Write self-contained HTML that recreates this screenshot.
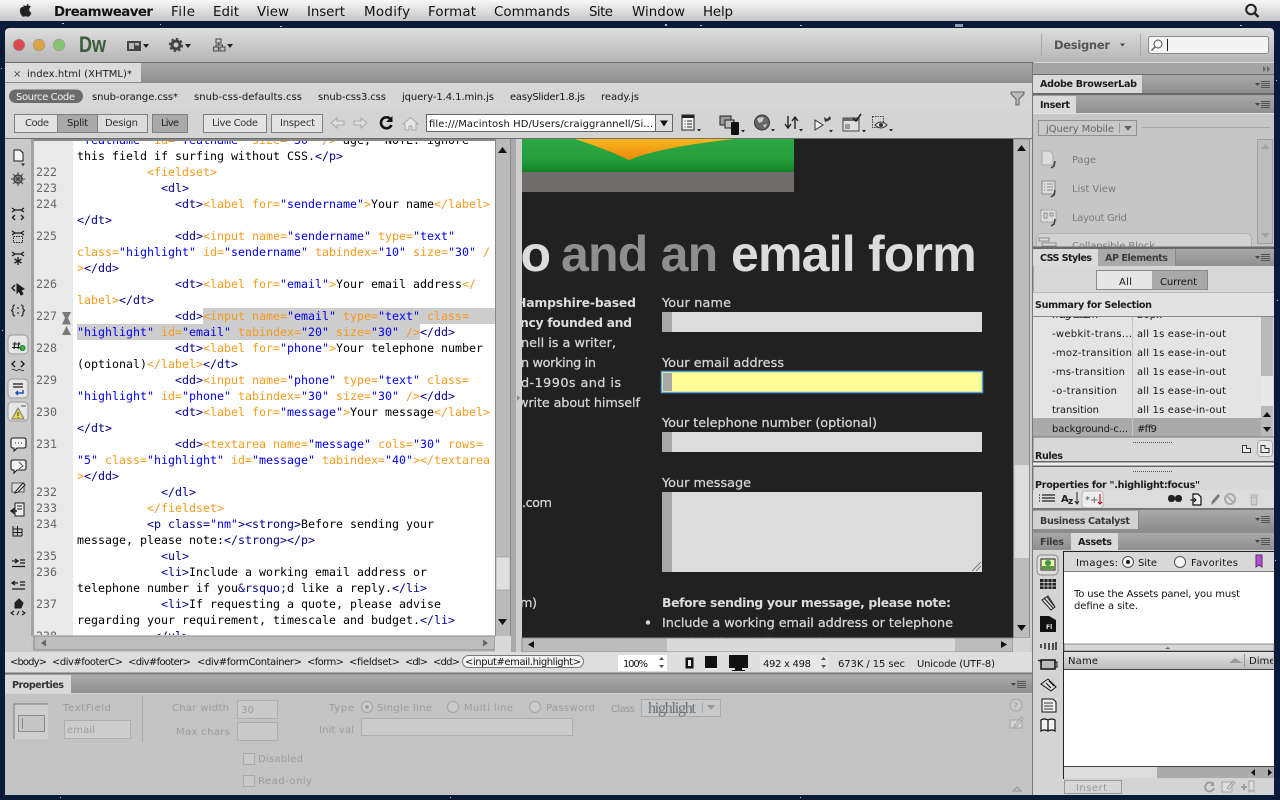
<!DOCTYPE html>
<html lang="en">
<head>
<meta charset="utf-8">
<title>Dreamweaver</title>
<style>
html,body{margin:0;padding:0;background:#0b1a38;width:1280px;height:800px;overflow:hidden}
svg{display:block;position:absolute;left:0;top:0}
text{font-family:"DejaVu Sans",sans-serif;font-size:10px;fill:#151515}
.m{font-size:13.4px;fill:#111}
.bd{font-weight:bold}
.pb{font-weight:bold;font-size:9.6px;fill:#1c1c1c}
.pg{font-weight:bold;font-size:9.6px;fill:#3c3c3c}
.x{fill:#9d9d9d;font-size:10px}
.ins{fill:#7b7b7b;font-size:10px}
.d{font-size:12.8px;fill:#d6d6d6;stroke:#d6d6d6;stroke-width:.25px}
.db{font-size:12.4px;font-weight:bold;fill:#dcdcdc}
.c{font-family:"DejaVu Sans Mono",monospace;font-size:11.63px;white-space:pre;fill:#000}
.ln{font-family:"DejaVu Sans Mono",monospace;font-size:11.63px;fill:#666}
.o{fill:#f59a1c}.n{fill:#000088}.v{fill:#0000f0}
.h{font-family:"Liberation Sans",sans-serif;font-weight:bold;font-size:50px;letter-spacing:-.8px}
</style>
</head>
<body>
<svg width="1280" height="800" viewBox="0 0 1280 800" xmlns="http://www.w3.org/2000/svg">
<defs>
<linearGradient id="gm" x1="0" y1="0" x2="0" y2="1"><stop offset="0" stop-color="#f7f7f7"/><stop offset="1" stop-color="#c6c6c6"/></linearGradient>
<linearGradient id="gt" x1="0" y1="0" x2="0" y2="1"><stop offset="0" stop-color="#dedede"/><stop offset="1" stop-color="#b5b5b5"/></linearGradient>
<linearGradient id="gs" x1="0" y1="0" x2="0" y2="1"><stop offset="0" stop-color="#a8a8a8"/><stop offset="1" stop-color="#8f8f8f"/></linearGradient>
<linearGradient id="gh" x1="0" y1="0" x2="0" y2="1"><stop offset="0" stop-color="#e2e2e2"/><stop offset="1" stop-color="#bcbcbc"/></linearGradient>
<linearGradient id="gg" x1="0" y1="0" x2="0" y2="1"><stop offset="0" stop-color="#2ca745"/><stop offset="0.6" stop-color="#25a03c"/><stop offset="1" stop-color="#138427"/></linearGradient>
<linearGradient id="gy" x1="0" y1="0" x2="0" y2="1"><stop offset="0" stop-color="#f7b81c"/><stop offset="1" stop-color="#f0890f"/></linearGradient>
<clipPath id="cc"><rect x="73" y="141" width="422" height="494"/></clipPath>
<clipPath id="cn"><rect x="34" y="141" width="39" height="494"/></clipPath>
<clipPath id="cd"><rect x="522" y="139" width="491" height="499"/></clipPath>
<clipPath id="ci"><rect x="1033" y="113" width="224" height="134"/></clipPath>
<clipPath id="cs"><rect x="1033" y="317" width="228" height="120"/></clipPath>
<symbol id="pm" width="16" height="10" viewBox="0 0 16 10"><path d="M0 3h5L2.500 6z" fill="#444"/><path d="M6 1.500h9M6 3.500h9M6 5.500h9M6 7.500h9" stroke="#555" stroke-width="1" fill="none"/></symbol>
</defs>

<!-- desktop -->
<rect width="1280" height="800" fill="#0b1a38"/>
<g fill="#b8c4d8">
<rect x="62" y="23" width="2" height="1"/><rect x="160" y="24" width="1" height="1"/><rect x="280" y="26" width="2" height="1"/><rect x="665" y="24" width="2" height="2"/><rect x="700" y="25" width="2" height="1"/><rect x="800" y="25" width="2" height="1"/><rect x="955" y="24" width="8" height="3" fill="#8b99ad"/><rect x="1240" y="25" width="2" height="1"/><rect x="1276" y="80" width="1" height="1"/><rect x="1277" y="300" width="1" height="1"/><rect x="1275" y="560" width="1" height="1"/><rect x="1" y="68" width="1" height="1"/><rect x="2" y="330" width="1" height="1"/><rect x="60" y="797" width="1" height="1"/><rect x="450" y="797" width="1" height="1"/><rect x="800" y="797" width="1" height="1"/>
</g>

<!-- menu bar -->
<rect width="1280" height="21" fill="url(#gm)"/>
<path d="M28.500 3.500c-.9.300-1.700 1.200-1.800 2.500 1 0 1.900-1 1.800-2.500zM23.500 6.700c-2.300 0-3.600 1.800-3.600 4 0 2.800 2 6 3.600 6 .8 0 1.200-.5 2.300-.5s1.400.5 2.300.5c1.500 0 2.900-2.400 3.300-4-1.500-.6-2.200-1.800-2.200-3.100 0-1.200.7-2.200 1.700-2.800-.7-.9-1.800-1.400-2.900-1.400-1 0-1.600.5-2.300.5-.7 0-1.300-.7-2.200-.7z" fill="#222"/>
<text class="m bd" x="54" y="16" textLength="99">Dreamweaver</text>
<text class="m" x="171" y="16" textLength="24">File</text>
<text class="m" x="213" y="16" textLength="26">Edit</text>
<text class="m" x="257" y="16" textLength="32">View</text>
<text class="m" x="307" y="16" textLength="38">Insert</text>
<text class="m" x="364" y="16" textLength="46">Modify</text>
<text class="m" x="428" y="16" textLength="48">Format</text>
<text class="m" x="494" y="16" textLength="76">Commands</text>
<text class="m" x="589" y="16" textLength="24">Site</text>
<text class="m" x="632" y="16" textLength="53">Window</text>
<text class="m" x="703" y="16" textLength="30">Help</text>
<circle cx="1251" cy="9.500" r="4.800" fill="none" stroke="#222" stroke-width="2"/><path d="M1254.500 13l4 4" stroke="#222" stroke-width="2.400"/>

<!-- window -->
<path d="M5 33q0-5 5-5H1269q5 0 5 5V795H5z" fill="#c6c6c6"/>
<path d="M5 33q0-5 5-5H1269q5 0 5 5V62H5z" fill="url(#gt)"/>
<rect x="5" y="62" width="1269" height="1.500" fill="#6f6f6f"/>
<circle cx="19" cy="45" r="5.800" fill="#d9494e" stroke="#999" stroke-width=".6"/>
<circle cx="39" cy="45" r="5.800" fill="#dba544" stroke="#999" stroke-width=".6"/>
<circle cx="59" cy="45" r="5.800" fill="#85c46e" stroke="#999" stroke-width=".6"/>
<text transform="translate(79,52) scale(.82,1)" style="font-family:'Liberation Sans',sans-serif;font-weight:bold;font-size:22px;fill:#3d5c3b">Dw</text>
<!-- layout icon -->
<rect x="127" y="41" width="14" height="10" fill="#444"/><rect x="129" y="43" width="5" height="6" fill="#bbb"/><rect x="135" y="43" width="4" height="2.500" fill="#bbb"/><path d="M143 44h6l-3 4z" fill="#222"/>
<!-- gear -->
<circle cx="176" cy="45" r="4" fill="none" stroke="#444" stroke-width="3"/><circle cx="176" cy="45" r="6.300" fill="none" stroke="#444" stroke-width="1.600" stroke-dasharray="2.500 2.400"/><path d="M185 44h6l-3 4z" fill="#222"/>
<!-- site icon -->
<path d="M216 39h5v4h-5zM213.500 47h5v4h-5zM220 47h5v4h-5zM218.500 43v2M216 47v-2h6.500v2" fill="none" stroke="#444" stroke-width="1"/><path d="M227 44h6l-3 4z" fill="#222"/>
<!-- right of app bar -->
<rect x="1041" y="34" width="1" height="22" fill="#aaa"/><rect x="1140" y="34" width="1" height="22" fill="#aaa"/>
<text x="1054" y="49" style="font-weight:bold;font-size:11.500px;fill:#555" textLength="56">Designer</text>
<path d="M1120 43.500h5l-2.500 3z" fill="#444"/>
<rect x="1148.500" y="36.500" width="120" height="17" rx="2" fill="#f4f4f4" stroke="#8c8c8c"/>
<circle cx="1158" cy="44" r="4" fill="none" stroke="#555"/><path d="M1155 47l-3.500 3.500" stroke="#555" stroke-width="1.300"/>
<rect x="1167" y="39" width="1" height="12" fill="#223"/>

<!-- doc tab strip -->
<rect x="5" y="63" width="1028" height="20" fill="url(#gs)"/>
<rect x="5" y="63" width="136" height="20" fill="#dbdbdb"/>
<text x="13" y="77" style="font-size:10px;fill:#444">×</text>
<text x="27" y="77" textLength="105" style="fill:#222">index.html (XHTML)*</text>
<rect x="5" y="82" width="1028" height="1" fill="#8a8a8a"/>

<!-- source bar -->
<rect x="5" y="83" width="1028" height="27" fill="#d6d6d6"/>
<rect x="9" y="89.500" width="74" height="13.500" rx="6.700" fill="#6b6b6b"/>
<text x="16" y="100" textLength="59" style="fill:#f2f2f2">Source Code</text>
<text x="92" y="100" textLength="86">snub-orange.css*</text>
<text x="194" y="100" textLength="108">snub-css-defaults.css</text>
<text x="318" y="100" textLength="68">snub-css3.css</text>
<text x="402" y="100" textLength="92">jquery-1.4.1.min.js</text>
<text x="510" y="100" textLength="75">easySlider1.8.js</text>
<text x="601" y="100" textLength="38">ready.js</text>
<path d="M1011 92h13v2l-5 5v6h-3v-6l-5-5z" fill="#bbb" stroke="#666" stroke-width="1"/>

<!-- doc toolbar -->
<rect x="5" y="110" width="1028" height="29" fill="#d4d4d4"/>
<g stroke="#7f7f7f" stroke-width="1">
<rect x="14.500" y="114.500" width="43" height="18" fill="#e3e3e3"/>
<rect x="57.500" y="114.500" width="40" height="18" fill="#a9a9a9"/>
<rect x="97.500" y="114.500" width="50" height="18" fill="#dcdcdc"/>
<rect x="152.500" y="114.500" width="35" height="18" fill="#a9a9a9"/>
<rect x="203.500" y="114.500" width="63" height="18" fill="#e3e3e3"/>
<rect x="271.500" y="114.500" width="51" height="18" fill="#e3e3e3"/>
</g>
<text x="25" y="126" textLength="24" style="fill:#333">Code</text>
<text x="67" y="126" textLength="21" style="fill:#222">Split</text>
<text x="105" y="126" textLength="33" style="fill:#333">Design</text>
<text x="161" y="126" textLength="18" style="fill:#222">Live</text>
<text x="212" y="126" textLength="46" style="fill:#333">Live Code</text>
<text x="280" y="126" textLength="35" style="fill:#333">Inspect</text>
<path d="M331 123l6-5v3h7v4h-7v3z" fill="#ddd" stroke="#aaa"/>
<path d="M367 123l-6-5v3h-7v4h7v3z" fill="#ddd" stroke="#aaa"/>
<path d="M390.500 119a5.500 5.500 0 1 0 1 6" fill="none" stroke="#111" stroke-width="2.600"/><path d="M386 122h6.500v-6z" fill="#111"/>
<path d="M403 124l7.500-6.500 7.500 6.500h-2v6h-4v-4h-3v4h-4v-6z" fill="#e5e5e5" stroke="#aaa"/>
<rect x="426.500" y="114.500" width="229" height="17" fill="#fff" stroke="#666"/>
<rect x="655.500" y="114.500" width="17" height="17" fill="#ddd" stroke="#666"/>
<path d="M660 120.500h8l-4 6z" fill="#111"/>
<text x="429" y="127" textLength="224" style="fill:#111">file:///Macintosh HD/Users/craiggrannell/Si...</text>
<!-- toolbar icons -->
<rect x="682" y="115" width="12" height="15" fill="#f2f2f2" stroke="#222"/><rect x="682" y="115" width="12" height="3" fill="#222"/><path d="M684.500 121h1M687 121h5M684.500 124h1M687 124h5M684.500 127h1M687 127h5" stroke="#222"/><path d="M697 129h4l-2 2.500z" fill="#222"/>
<rect x="720" y="116" width="11" height="9" fill="#999" stroke="#222"/><rect x="725" y="120" width="9" height="8" fill="#bbb" stroke="#222"/><rect x="731" y="122" width="8" height="13" rx="1" fill="#111"/><path d="M741 130h4l-2 2.500z" fill="#222"/>
<circle cx="762" cy="122.500" r="7.500" fill="#666" stroke="#333"/><path d="M757 119q4-3 7-1l-2 4-3 1zM763 125l4-1-2 4z" fill="#ccc"/><path d="M771 129h4l-2 2.500z" fill="#222"/>
<path d="M788 116v12m-3-4l3 4 3-4M795 129v-12m-3 4l3-4 3 4" fill="none" stroke="#222" stroke-width="1.400"/><path d="M799 129h4l-2 2.500z" fill="#222"/>
<path d="M815 120v10l8-5z" fill="#eee" stroke="#333"/><path d="M824 117l3 2 3-3 1 3-3 2-3 1z" fill="#333"/><path d="M829 130h4l-2 2.500z" fill="#222"/>
<rect x="843" y="118" width="16" height="13" fill="#ddd" stroke="#444"/><rect x="843" y="118" width="16" height="3" fill="#666"/><rect x="845" y="124" width="5" height="5" fill="#999"/><path d="M853 118l3 3 5-7" fill="none" stroke="#222" stroke-width="1.600"/><path d="M862 130h4l-2 2.500z" fill="#222"/>
<rect x="872.500" y="116.500" width="11" height="11" fill="none" stroke="#444" stroke-dasharray="1.500 1"/><path d="M875 125q6-6 12 0q-6 6-12 0z" fill="#ddd" stroke="#333"/><circle cx="881" cy="125" r="2" fill="#333"/><path d="M889 129h4l-2 2.500z" fill="#222"/>
<rect x="5" y="138" width="1028" height="1.200" fill="#6e6e6e"/>

<!-- left coding toolbar -->
<rect x="5" y="139" width="26" height="513" fill="#c9c9c9"/>
<rect x="31" y="139" width="3" height="497" fill="#a3a3a3"/>
<rect x="8" y="335" width="20" height="19" rx="4" fill="#e6e6e6" stroke="#9a9a9a"/>
<rect x="8" y="379" width="20" height="19" rx="4" fill="#e6e6e6" stroke="#9a9a9a"/>
<rect x="8" y="402" width="20" height="19" rx="4" fill="#e6e6e6" stroke="#9a9a9a"/>
<g fill="none" stroke="#1c1c1c">
<path d="M14 150h6l3 3v8h-9z" fill="#f4f4f4"/><path d="M21 163.500h4l-2 2.500z" fill="#222" stroke="none"/>
<circle cx="18" cy="179" r="4" stroke-width="1.600" stroke="#444"/><path d="M18 172v14M11 179h14M13 174l10 10M23 174l-10 10" stroke="#444"/>
<path d="M12 208l3 2-3 2M24 208l-3 2 3 2M15 210h6M15 215l-2.500 2.500 2.500 2.500M21 215l2.500 2.500-2.500 2.500" stroke-width="1.300"/>
<path d="M12 231l3 2-3 2M24 231l-3 2 3 2M15 233h6" stroke-width="1.300"/><rect x="13.500" y="236.500" width="9" height="6" stroke-dasharray="1.500 1"/>
<path d="M12 252l3 2-3 2M24 252l-3 2 3 2M15 254h6M18 257v8M14.500 259l7 4M21.500 259l-7 4" stroke-width="1.300"/>
<path d="M15 285l-3 3 3 3" stroke-width="1.400"/><path d="M17 284l7 5-3 1 2 4-2 1-2-4-2 2z" fill="#1c1c1c"/>
<path d="M15 305q-2 0-2 2v2l-1.500 1.500 1.500 1.500v2q0 2 2 2M21 305q2 0 2 2v2l1.500 1.500-1.500 1.500v2q0 2-2 2M18 307v2M18 312v2" stroke-width="1.100"/>
<path d="M15 342l-1 7M19 342l-1 7M12.500 344h8M12 347.500h8" stroke-width="1.100"/><circle cx="22.500" cy="348" r="2.500" fill="#39b54a" stroke="#1a7a2c"/>
<path d="M15 361l-3 3 3 3M21 361l3 3-3 3" stroke-width="1.400"/><path d="M12 370q1.500-1.500 3 0t3 0 3 0 3 0" stroke-width=".8"/>
<path d="M13 384h10M13 387h10" stroke-width="1.300"/><path d="M23 390v3h-7m2-2l-2 2 2 2" stroke="#1f4fb5" stroke-width="1.500"/>
<path d="M12 419l6-11 6 11z" fill="#e6d94e" stroke="#777"/><path d="M18 412v4M18 417v1" stroke="#333"/><path d="M21 406h5" stroke="#555"/>
<path d="M13 438h11q2 0 2 2v6q0 2-2 2h-7l-3 3v-3h-1q-2 0-2-2v-6q0-2 2-2z" fill="#f2f2f2" stroke-width="1.100"/><path d="M15 443h1M18 443h1M21 443h1" stroke-width="1.100"/>
<path d="M13 460h11q2 0 2 2v6q0 2-2 2h-7l-3 3v-3h-1q-2 0-2-2v-6q0-2 2-2z" fill="#f2f2f2" stroke-width="1.100"/><path d="M19 462l4 4-4 3" stroke="#555"/>
<rect x="12" y="483" width="12" height="9" fill="#ddd" stroke="#555"/><path d="M16 491l7-8 2 2-7 7-3 1z" fill="#eee"/>
<path d="M15 503h9v13h-9zM17 506h5M17 509h5" fill="#eee"/><path d="M17 511l-5 0m3-3l-4 3 4 3" stroke-width="1.400"/>
<path d="M13 526v10h9M13 529h9v7M13 532.500h9M17.500 526v10" stroke-width="1"/>
<path d="M12 561h6m-3-2l3 2-3 2M20 560h5M20 563h5M12 566.500h13" stroke-width="1.300"/>
<path d="M18 583h-6m3-2l-3 2 3 2M20 582h5M20 585h5M12 589h13" stroke-width="1.300"/>
<path d="M15 603l4-4 4 4-2 5h-6z" fill="#222"/><path d="M14 611l-3 2 3 2M22 611l3 2-3 2M17 615l2-4" stroke-width="1.100"/>
</g>

<!-- code pane -->
<rect x="34" y="139" width="39" height="497" fill="#e9e9e9"/>
<rect x="73" y="139" width="422" height="497" fill="#fff"/>
<rect x="203" y="308" width="292" height="16" fill="#cdcdcd"/>
<rect x="77" y="324" width="343" height="16" fill="#cdcdcd"/>
<rect x="34" y="139" width="461" height="2" fill="#8a8a8a"/>
<path d="M62 312h9l-3 6 3 6.500h-9l3-6.500zM66.500 326l4.500 9h-9z" fill="#7a7a7a"/>

<g clip-path="url(#cn)">
<text class="ln" x="36" y="176">222</text><text class="ln" x="36" y="192">223</text><text class="ln" x="36" y="208">224</text>
<text class="ln" x="36" y="240">225</text><text class="ln" x="36" y="288">226</text><text class="ln" x="36" y="320">227</text>
<text class="ln" x="36" y="352">228</text><text class="ln" x="36" y="384">229</text><text class="ln" x="36" y="416">230</text>
<text class="ln" x="36" y="448">231</text><text class="ln" x="36" y="496">232</text><text class="ln" x="36" y="512">233</text>
<text class="ln" x="36" y="528">234</text><text class="ln" x="36" y="560">235</text><text class="ln" x="36" y="576">236</text>
<text class="ln" x="36" y="608">237</text><text class="ln" x="36" y="640">238</text>
</g>

<g clip-path="url(#cc)">
<text class="c" x="77" y="144"><tspan class="v"> featname"</tspan><tspan class="o"> id=</tspan><tspan class="v">"featname"</tspan><tspan class="o"> size=</tspan><tspan class="v">"30"</tspan><tspan class="o"> /&gt;</tspan> age, "NOTE: ignore</text>
<text class="c" x="77" y="160">this field if surfing without CSS.<tspan class="n">&lt;/p&gt;</tspan></text>
<text class="c o" x="147" y="176">&lt;fieldset&gt;</text>
<text class="c n" x="161" y="192">&lt;dl&gt;</text>
<text class="c" x="175" y="208"><tspan class="n">&lt;dt&gt;</tspan><tspan class="o">&lt;label for=</tspan><tspan class="v">"sendername"</tspan><tspan class="o">&gt;</tspan>Your name<tspan class="o">&lt;/label&gt;</tspan></text>
<text class="c n" x="77" y="224">&lt;/dt&gt;</text>
<text class="c" x="175" y="240"><tspan class="n">&lt;dd&gt;</tspan><tspan class="o">&lt;input name=</tspan><tspan class="v">"sendername"</tspan><tspan class="o"> type=</tspan><tspan class="v">"text"</tspan></text>
<text class="c" x="77" y="256"><tspan class="o">class=</tspan><tspan class="v">"highlight"</tspan><tspan class="o"> id=</tspan><tspan class="v">"sendername"</tspan><tspan class="o"> tabindex=</tspan><tspan class="v">"10"</tspan><tspan class="o"> size=</tspan><tspan class="v">"30"</tspan><tspan class="o"> /</tspan></text>
<text class="c" x="77" y="272"><tspan class="o">&gt;</tspan><tspan class="n">&lt;/dd&gt;</tspan></text>
<text class="c" x="175" y="288"><tspan class="n">&lt;dt&gt;</tspan><tspan class="o">&lt;label for=</tspan><tspan class="v">"email"</tspan><tspan class="o">&gt;</tspan>Your email address<tspan class="o">&lt;/</tspan></text>
<text class="c" x="77" y="304"><tspan class="o">label&gt;</tspan><tspan class="n">&lt;/dt&gt;</tspan></text>
<text class="c" x="175" y="320"><tspan class="n">&lt;dd&gt;</tspan><tspan class="o">&lt;input name=</tspan><tspan class="v">"email"</tspan><tspan class="o"> type=</tspan><tspan class="v">"text"</tspan><tspan class="o"> class=</tspan></text>
<text class="c" x="77" y="336"><tspan class="v">"highlight"</tspan><tspan class="o"> id=</tspan><tspan class="v">"email"</tspan><tspan class="o"> tabindex=</tspan><tspan class="v">"20"</tspan><tspan class="o"> size=</tspan><tspan class="v">"30"</tspan><tspan class="o"> /&gt;</tspan><tspan class="n">&lt;/dd&gt;</tspan></text>
<text class="c" x="175" y="352"><tspan class="n">&lt;dt&gt;</tspan><tspan class="o">&lt;label for=</tspan><tspan class="v">"phone"</tspan><tspan class="o">&gt;</tspan>Your telephone number</text>
<text class="c" x="77" y="368">(optional)<tspan class="o">&lt;/label&gt;</tspan><tspan class="n">&lt;/dt&gt;</tspan></text>
<text class="c" x="175" y="384"><tspan class="n">&lt;dd&gt;</tspan><tspan class="o">&lt;input name=</tspan><tspan class="v">"phone"</tspan><tspan class="o"> type=</tspan><tspan class="v">"text"</tspan><tspan class="o"> class=</tspan></text>
<text class="c" x="77" y="400"><tspan class="v">"highlight"</tspan><tspan class="o"> id=</tspan><tspan class="v">"phone"</tspan><tspan class="o"> tabindex=</tspan><tspan class="v">"30"</tspan><tspan class="o"> size=</tspan><tspan class="v">"30"</tspan><tspan class="o"> /&gt;</tspan><tspan class="n">&lt;/dd&gt;</tspan></text>
<text class="c" x="175" y="416"><tspan class="n">&lt;dt&gt;</tspan><tspan class="o">&lt;label for=</tspan><tspan class="v">"message"</tspan><tspan class="o">&gt;</tspan>Your message<tspan class="o">&lt;/label&gt;</tspan></text>
<text class="c n" x="77" y="432">&lt;/dt&gt;</text>
<text class="c" x="175" y="448"><tspan class="n">&lt;dd&gt;</tspan><tspan class="o">&lt;textarea name=</tspan><tspan class="v">"message"</tspan><tspan class="o"> cols=</tspan><tspan class="v">"30"</tspan><tspan class="o"> rows=</tspan></text>
<text class="c" x="77" y="464"><tspan class="v">"5"</tspan><tspan class="o"> class=</tspan><tspan class="v">"highlight"</tspan><tspan class="o"> id=</tspan><tspan class="v">"message"</tspan><tspan class="o"> tabindex=</tspan><tspan class="v">"40"</tspan><tspan class="o">&gt;&lt;/textarea</tspan></text>
<text class="c" x="77" y="480"><tspan class="o">&gt;</tspan><tspan class="n">&lt;/dd&gt;</tspan></text>
<text class="c n" x="161" y="496">&lt;/dl&gt;</text>
<text class="c o" x="147" y="512">&lt;/fieldset&gt;</text>
<text class="c" x="147" y="528"><tspan class="n">&lt;p </tspan><tspan class="n">class=</tspan><tspan class="v">"nm"</tspan><tspan class="n">&gt;&lt;strong&gt;</tspan>Before sending your</text>
<text class="c" x="77" y="544">message, please note:<tspan class="n">&lt;/strong&gt;&lt;/p&gt;</tspan></text>
<text class="c n" x="161" y="560">&lt;ul&gt;</text>
<text class="c" x="161" y="576"><tspan class="n">&lt;li&gt;</tspan>Include a working email address or</text>
<text class="c" x="77" y="592">telephone number if you<tspan class="n">&amp;rsquo;</tspan>d like a reply.<tspan class="n">&lt;/li&gt;</tspan></text>
<text class="c" x="161" y="608"><tspan class="n">&lt;li&gt;</tspan>If requesting a quote, please advise</text>
<text class="c" x="77" y="624">regarding your requirement, timescale and budget.<tspan class="n">&lt;/li&gt;</tspan></text>
<text class="c n" x="154" y="640">&lt;/ul&gt;</text>
</g>

<!-- code scrollbars -->
<rect x="495" y="139" width="15.500" height="497" fill="#bababa"/>
<rect x="495" y="139" width="1" height="497" fill="#888"/><rect x="510" y="139" width="1" height="497" fill="#8a8a8a"/>
<rect x="496" y="557" width="14" height="33" fill="#e0e0e0" stroke="#999" stroke-width=".6"/>
<path d="M498 153l4.500-6 4.500 6z" fill="#111"/>
<path d="M498 619l4.500 6 4.500-6z" fill="#111"/>
<rect x="34" y="636" width="461" height="14" fill="#bdbdbd" stroke="#8a8a8a" stroke-width="1"/>
<path d="M46 639.500v7l-5-3.500zM483 639.500v7l5-3.500z" fill="#666"/>
<rect x="495" y="636" width="16" height="16" fill="#d8d8d8"/>
<rect x="511" y="139" width="5" height="513" fill="#a9a9a9"/>
<rect x="516" y="139" width="6" height="513" fill="#cfcfcf"/>
<path d="M517 395l3 3-3 3z" fill="#888"/>

<!-- design view -->
<rect x="522" y="139" width="491" height="499" fill="#212121"/>
<g clip-path="url(#cd)">
<rect x="500" y="139" width="294" height="33" fill="url(#gg)"/>
<path d="M575 139Q606 149 629 160Q660 147 735 139Z" fill="url(#gy)"/>
<rect x="500" y="172" width="294" height="20" fill="#716c6c"/>
<text class="h" x="520.500" y="271" style="fill:#dcdcdc">o</text>
<text class="h" x="561" y="271" style="fill:#8e8e8e">and an</text>
<text class="h" x="731" y="271" style="fill:#dcdcdc">email form</text>
<text class="db" x="516" y="307" textLength="120">Hampshire-based</text>
<text class="db" x="520" y="327" textLength="112">ncy founded and</text>
<text class="d" x="521" y="347" textLength="95">nell is a writer,</text>
<text class="d" x="521" y="367" textLength="75">n working in</text>
<text class="d" x="521" y="387" textLength="100">d-1990s and is</text>
<text class="d" x="518" y="407" textLength="122">write about himself</text>
<text class="d" x="522" y="507" textLength="30">.com</text>
<text class="d" x="520" y="607" textLength="17">m)</text>
<text class="d" x="662" y="307" textLength="69">Your name</text>
<text class="d" x="662" y="367" textLength="122">Your email address</text>
<text class="d" x="662" y="427" textLength="215">Your telephone number (optional)</text>
<text class="d" x="662" y="487" textLength="89">Your message</text>
<rect x="662" y="312" width="320" height="20" fill="#dcdcdc"/><rect x="662" y="312" width="10" height="20" fill="#a8a8a8"/>
<rect x="661.500" y="371.500" width="321" height="21" fill="#ffff99" stroke="#5c9fd6" stroke-width="1.500"/><rect x="663" y="373" width="9" height="18" fill="#a8a8a8"/>
<rect x="662" y="432" width="320" height="20" fill="#dcdcdc"/><rect x="662" y="432" width="10" height="20" fill="#a8a8a8"/>
<rect x="662" y="492" width="320" height="80" fill="#dcdcdc"/><rect x="662" y="492" width="10" height="80" fill="#a8a8a8"/>
<path d="M972 571l9-9M976 571l5-5" stroke="#666" stroke-width=".8"/>
<text class="db" x="662" y="607" textLength="289">Before sending your message, please note:</text>
<circle cx="648" cy="622.500" r="2.200" fill="#d6d6d6"/>
<text class="d" x="662" y="627" textLength="291">Include a working email address or telephone</text>
<text class="d" x="662" y="647" textLength="170">number if you'd like a reply.</text>
</g>
<rect x="522" y="638" width="491" height="14" fill="#bcbcbc" stroke="#8a8a8a"/>
<rect x="667" y="638.500" width="288" height="13" fill="#dadada"/>
<path d="M534 641v7l-6-3.500z" fill="#111"/><path d="M1001 641v7l6-3.500z" fill="#111"/>
<rect x="1013.500" y="139" width="16" height="499" fill="#bcbcbc" stroke="#8a8a8a"/>
<rect x="1014.500" y="465" width="14.500" height="93" fill="#dddddd"/>
<path d="M1017 151l4.500-6 4.500 6z" fill="#111"/><path d="M1017 625l4.500 6 4.500-6z" fill="#111"/>
<rect x="1013" y="638" width="17" height="14" fill="#d4d4d4"/>
<rect x="1030" y="139" width="3" height="534" fill="#cfcfcf"/>

<!-- status bar -->
<rect x="5" y="652" width="1028" height="21" fill="#dedede"/>
<text x="10" y="665" textLength="37">&lt;body&gt;</text>
<text x="52" y="665" textLength="71">&lt;div#footerC&gt;</text>
<text x="128" y="665" textLength="63">&lt;div#footer&gt;</text>
<text x="197" y="665" textLength="105">&lt;div#formContainer&gt;</text>
<text x="307" y="665" textLength="37">&lt;form&gt;</text>
<text x="349" y="665" textLength="51">&lt;fieldset&gt;</text>
<text x="405" y="665" textLength="23">&lt;dl&gt;</text>
<text x="433" y="665" textLength="27">&lt;dd&gt;</text>
<rect x="462.500" y="655.500" width="121" height="12" rx="6" fill="#f4f4f4" stroke="#777"/>
<text x="465" y="665" textLength="116">&lt;input#email.highlight&gt;</text>
<rect x="618" y="655" width="49" height="16" fill="#fff"/>
<text x="623" y="667" textLength="25">100%</text>
<path d="M659 660l2.500-3 2.500 3zM659 665l2.500 3 2.500-3z" fill="#555"/>
<rect x="686" y="658" width="7" height="10" fill="#111" stroke="#111"/><rect x="688" y="660" width="3" height="6" fill="#eee"/>
<rect x="705.500" y="656.500" width="11" height="13" fill="#111" stroke="#111"/><rect x="705" y="668" width="12" height="2" fill="#eee"/>
<rect x="729" y="655" width="19" height="13" fill="#111"/><rect x="735" y="668" width="7" height="2" fill="#111"/><rect x="732" y="670" width="13" height="1" fill="#111"/>
<rect x="760" y="655" width="69" height="16" fill="#e7e7e7"/>
<text x="763" y="667" textLength="48">492 x 498</text>
<path d="M821 660l2.500-3 2.500 3zM821 665l2.500 3 2.500-3z" fill="#555"/>
<text x="838" y="667" textLength="67">673K / 15 sec</text>
<text x="917" y="667" textLength="78">Unicode (UTF-8)</text>

<!-- properties -->
<rect x="5" y="672.500" width="1028" height="2" fill="#777"/>
<rect x="5" y="675" width="1028" height="18" fill="url(#gs)"/>
<rect x="5" y="675" width="66" height="18" fill="#dadada"/>
<text class="pb" x="12" y="688" textLength="52" style="fill:#333">Properties</text>
<use href="#pm" x="1011" y="680"/>
<rect x="5" y="693" width="1028" height="1" fill="#d5d5d5"/>
<rect x="5" y="694" width="1028" height="101" fill="#c3c3c3"/>
<rect x="14" y="704" width="34" height="35" fill="#cfcfcf"/>
<path d="M14 739v-35h34" fill="none" stroke="#777"/>
<rect x="18.500" y="715.500" width="26" height="16" fill="#c6c6c6" stroke="#888"/><rect x="22" y="718" width="1" height="11" fill="#888"/>
<text class="x" x="63" y="711" textLength="48">TextField</text>
<rect x="64.500" y="720.500" width="66" height="18" fill="#cdcdcd" stroke="#aeaeae"/><text class="x" x="67" y="733" textLength="28">email</text>
<rect x="142" y="696" width="1" height="46" fill="#a9a9a9"/>
<text class="x" x="172" y="711" textLength="57">Char width</text>
<rect x="237.500" y="700.500" width="40" height="18" fill="#c9c9c9" stroke="#aeaeae"/><text class="x" x="241" y="713" textLength="13">30</text>
<text class="x" x="176" y="735" textLength="54">Max chars</text>
<rect x="237.500" y="722.500" width="40" height="18" fill="#c9c9c9" stroke="#aeaeae"/>
<text class="x" x="329" y="711" textLength="25">Type</text>
<circle cx="367" cy="707" r="5.500" fill="#cbcbcb" stroke="#a5a5a5"/><circle cx="367" cy="707" r="1.800" fill="#999"/>
<text class="x" x="377" y="711" textLength="55">Single line</text>
<circle cx="453" cy="707" r="5.500" fill="#cbcbcb" stroke="#a5a5a5"/><text class="x" x="464" y="711" textLength="49">Multi line</text>
<circle cx="535" cy="707" r="5.500" fill="#cbcbcb" stroke="#a5a5a5"/><text class="x" x="546" y="711" textLength="49">Password</text>
<text class="x" x="611" y="712" textLength="24">Class</text>
<rect x="641.500" y="699.500" width="79" height="17" fill="#c8c8c8" stroke="#aaa"/>
<text x="648" y="713" textLength="48" style="font-family:'Liberation Serif',serif;font-size:16px;fill:#6a6f78">highlight</text>
<rect x="702" y="702" width="1" height="11" fill="#aaa"/><path d="M707 705h8l-4 5z" fill="#999"/>
<text class="x" x="319" y="733" textLength="35">Init val</text>
<rect x="361.500" y="718.500" width="211" height="17" fill="#cbcbcb" stroke="#aeaeae"/>
<rect x="243.500" y="753.500" width="11" height="11" fill="#c9c9c9" stroke="#aaa"/><text class="x" x="258" y="762" textLength="45">Disabled</text>
<rect x="243.500" y="775.500" width="11" height="11" fill="#c9c9c9" stroke="#aaa"/><text class="x" x="258" y="784" textLength="54">Read-only</text>
<circle cx="1016" cy="705" r="6" fill="#c9c9c9" stroke="#a5a5a5"/><text x="1013" y="709" style="font-size:9px;fill:#a0a0a0">?</text>
<path d="M1010 720h12v8h-12zM1015 725l6-8 2 1.500-6 7.500-3 1z" fill="#d2d2d2" stroke="#a5a5a5"/>
<path d="M1013 791l4-4 4 4z" fill="none" stroke="#999"/>

<!-- right panels -->
<rect x="1033" y="62" width="241" height="733" fill="#d8d8d8"/>
<rect x="1032" y="62" width="1.500" height="733" fill="#777"/>
<rect x="1033" y="63" width="241" height="11" fill="#a3a3a3"/>
<path d="M1263 66l3 3-3 3zM1267 66l3 3-3 3z" fill="#666"/>
<rect x="1033" y="74" width="241" height="1" fill="#6e6e6e"/>
<rect x="1033" y="75" width="241" height="18" fill="url(#gs)"/>
<rect x="1033" y="75" width="109" height="18" fill="#dadada"/>
<text class="pb" x="1040" y="87" textLength="97">Adobe BrowserLab</text>
<use href="#pm" x="1255" y="80"/>
<rect x="1033" y="93" width="241" height="2.500" fill="#6a6a6a"/>
<rect x="1033" y="96" width="241" height="17" fill="url(#gs)"/>
<rect x="1033" y="96" width="43" height="17" fill="#dadada"/>
<text class="pb" x="1040" y="108" textLength="30">Insert</text>
<use href="#pm" x="1255" y="100"/>
<rect x="1033" y="113" width="241" height="134" fill="#c6c6c6"/>
<rect x="1033" y="113" width="241" height="1" fill="#e4e4e4"/>
<rect x="1038.500" y="120.500" width="98" height="15" fill="#c9c9c9" stroke="#8f8f8f"/>
<text x="1046" y="132" textLength="68" style="fill:#666">jQuery Mobile</text>
<rect x="1119" y="123" width="1" height="10" fill="#999"/><path d="M1124 126h8l-4 5z" fill="#666"/>
<rect x="1142" y="127" width="128" height="1" fill="#a9a9a9"/>
<rect x="1257.500" y="139.500" width="15" height="104" fill="#bdbdbd" stroke="#a0a0a0"/>
<path d="M1261 149l4.500-5 4.500 5zM1261 233l4.500 5 4.500-5z" fill="#a5a5a5"/>
<g clip-path="url(#ci)">
<rect x="1036.500" y="233.500" width="215" height="30" rx="5" fill="#d2d2d2" stroke="#b3b3b3"/>
<text class="ins" x="1072" y="163" textLength="24">Page</text>
<text class="ins" x="1072" y="192" textLength="44">List View</text>
<text class="ins" x="1072" y="221" textLength="55">Layout Grid</text>
<text class="ins" x="1072" y="249" textLength="83">Collapsible Block</text>
<g fill="none" stroke="#8a8a8a">
<path d="M1042 151h8l3 3v11h-11z" fill="#dcdcdc" stroke="#a8a8a8"/>
<rect x="1042" y="181" width="13" height="13" fill="#ddd"/><path d="M1044 184h1M1047 184h6M1044 187h1M1047 187h6M1044 190h1M1047 190h6"/>
<rect x="1041" y="210" width="15" height="12" stroke-dasharray="1.500 1" fill="#ddd"/><rect x="1044" y="213" width="3" height="5"/><rect x="1050" y="213" width="3" height="3"/>
<path d="M1039 238h10v3h-10zM1042 243h14v3h-14z" fill="#ddd"/>
</g>
<path d="M1055 161l-1 5-3 2M1055 190l-1 5-3 2M1055 219l-1 5-3 2" fill="none" stroke="#444" stroke-width="1.600"/>
</g>
<rect x="1033" y="246.500" width="241" height="2.500" fill="#6a6a6a"/>
<rect x="1033" y="249" width="241" height="17" fill="url(#gs)"/>
<rect x="1033" y="249" width="65" height="17" fill="#dadada"/>
<rect x="1098" y="249" width="77" height="17" fill="#a9a9a9"/><rect x="1175" y="249" width="1" height="17" fill="#888"/>
<text class="pb" x="1040" y="261" textLength="52">CSS Styles</text>
<text class="pg" x="1105" y="261" textLength="63">AP Elements</text>
<use href="#pm" x="1255" y="253"/>
<rect x="1096.500" y="270.500" width="111" height="19" fill="#e6e6e6" stroke="#8a8a8a"/>
<rect x="1152" y="271" width="55" height="18" fill="#a8a8a8"/>
<text x="1119" y="285" textLength="13">All</text>
<text x="1160" y="285" textLength="37">Current</text>
<rect x="1033" y="292" width="241" height="1" fill="#bbb"/>
<rect x="1033" y="293" width="241" height="23" fill="#e2e2e2"/>
<text class="pb" x="1035" y="308" textLength="117">Summary for Selection</text>
<rect x="1033" y="316" width="241" height="1" fill="#888"/>
<rect x="1033" y="317" width="228" height="120" fill="#e4e4e4"/>
<g clip-path="url(#cs)">
<rect x="1033" y="418" width="228" height="19" fill="#ababab"/>
<rect x="1132" y="317" width="1" height="120" fill="#c5c5c5"/>
<text x="1052" y="318" textLength="46">margin-bottom</text>
<text x="1137" y="318">20px</text>
<g>
<text x="1052" y="337" textLength="80">-webkit-trans...</text><text x="1137" y="337" textLength="89">all 1s ease-in-out</text>
<text x="1052" y="356" textLength="80">-moz-transition</text><text x="1137" y="356" textLength="89">all 1s ease-in-out</text>
<text x="1052" y="375" textLength="73">-ms-transition</text><text x="1137" y="375" textLength="89">all 1s ease-in-out</text>
<text x="1052" y="394" textLength="65">-o-transition</text><text x="1137" y="394" textLength="89">all 1s ease-in-out</text>
<text x="1052" y="413" textLength="47">transition</text><text x="1137" y="413" textLength="89">all 1s ease-in-out</text>
<text x="1052" y="432" textLength="76">background-c...</text><text x="1137" y="432" textLength="20">#ff9</text>
</g>
</g>
<rect x="1261" y="317" width="12" height="120" fill="#bababa"/>
<rect x="1261" y="376" width="12" height="30" fill="#e8e8e8"/>
<path d="M1263 417l4-5 4 5zM1263 427l4 5 4-5z" fill="#111"/>
<rect x="1033" y="436.500" width="241" height="1" fill="#777"/>
<path d="M1133 442.500h39" stroke="#555" stroke-dasharray="1 1" fill="none"/>
<path d="M1242.500 445.500h4v3h4v4h-8z" fill="#eee" stroke="#333"/><rect x="1257.500" y="440.500" width="15" height="16" rx="3" fill="#e6e6e6" stroke="#aaa"/><path d="M1261 445.500h4v3h4v4h-8z" fill="#eee" stroke="#333"/>
<text class="pb" x="1035" y="459" textLength="28">Rules</text>
<rect x="1033" y="461" width="241" height="1.500" fill="#666"/>
<rect x="1033" y="462.500" width="241" height="3.500" fill="#eee"/>
<rect x="1033" y="465.500" width="241" height="1.500" fill="#666"/>
<path d="M1133 471.500h39" stroke="#555" stroke-dasharray="1 1" fill="none"/>
<text class="pb" x="1035" y="488" textLength="165">Properties for ".highlight:focus"</text>
<rect x="1033" y="490" width="241" height="18" fill="#dcdcdc"/>
<path d="M1039 495h1M1039 498h1M1039 501h1M1042 495h13M1042 498h13M1042 501h13" stroke="#222" stroke-width="1.200"/>
<text x="1061" y="502" style="font-weight:bold;font-size:10px;fill:#222">A</text><text x="1068" y="504" style="font-weight:bold;font-size:9px;fill:#222">z</text><path d="M1077 492v12m-2-3l2 3 2-3" stroke="#222" fill="none"/>
<rect x="1082" y="491" width="21" height="17" rx="3" fill="#eee" stroke="#b8b8b8"/><text x="1085" y="503" style="font-size:10px;fill:#555">*+</text><path d="M1100 494v10m-2-2l2 2 2-2" stroke="#a00" fill="none"/>
<rect x="1168" y="495" width="7" height="7" rx="3" fill="#222"/><rect x="1175" y="495" width="7" height="7" rx="3" fill="#222"/>
<path d="M1193 494h5l3 3v8h-8z" fill="#eee" stroke="#111" stroke-width="1.200"/><path d="M1190 500h6m-2-2l2 2-2 2" stroke="#111" fill="none"/>
<path d="M1211 505l1-4 6-7 2 2-6 7z" fill="#777"/>
<circle cx="1230" cy="499" r="5" fill="none" stroke="#aaa" stroke-width="2"/><path d="M1227 496l6 6" stroke="#aaa" stroke-width="1.600"/>
<path d="M1250 495h8M1251 497h6l-.5 8h-5z" fill="#ccc" stroke="#aaa"/>
<rect x="1033" y="508" width="241" height="2.500" fill="#777"/>
<rect x="1033" y="511" width="241" height="18" fill="url(#gs)"/>
<rect x="1033" y="511" width="105" height="18" fill="#d2d2d2"/><rect x="1138" y="511" width="1" height="18" fill="#888"/>
<text class="pb" x="1040" y="524" textLength="90" style="fill:#3a3a3a">Business Catalyst</text>
<use href="#pm" x="1255" y="515"/>
<rect x="1033" y="529" width="241" height="4" fill="#8c8c8c"/>
<rect x="1033" y="533" width="241" height="17" fill="url(#gs)"/>
<rect x="1071" y="533" width="47" height="17" fill="#dadada"/>
<text class="pg" x="1040" y="545" textLength="24">Files</text>
<text class="pb" x="1078" y="545" textLength="34">Assets</text>
<use href="#pm" x="1255" y="537"/>
<rect x="1033" y="550" width="241" height="245" fill="#d4d4d4"/>
<rect x="1063" y="551" width="1.500" height="228" fill="#222"/>
<rect x="1064" y="551" width="210" height="1" fill="#222"/>
<rect x="1064" y="552" width="210" height="20" fill="#d8d8d8"/>
<text x="1076" y="566" textLength="42" style="fill:#111">Images:</text>
<circle cx="1128" cy="562" r="5.500" fill="#f6f6f6" stroke="#555"/><circle cx="1128" cy="562" r="2" fill="#111"/>
<text x="1138" y="566" textLength="19">Site</text>
<circle cx="1180" cy="562" r="5.500" fill="#f6f6f6" stroke="#555"/>
<text x="1191" y="566" textLength="47">Favorites</text>
<path d="M1256 555h6v12l-3-2-3 2z" fill="#b44fd0" stroke="#5c2a70"/>
<rect x="1064" y="571.500" width="210" height="1" fill="#222"/>
<rect x="1064" y="572" width="210" height="72" fill="#fff"/>
<text x="1074" y="597" textLength="166" style="fill:#111">To use the Assets panel, you must</text>
<text x="1074" y="609" textLength="64" style="fill:#111">define a site.</text>
<rect x="1064" y="644" width="210" height="7" fill="#d6d6d6" stroke="#666" stroke-width=".7"/>
<path d="M1165 649l3-2 2 2z" fill="#666"/>
<rect x="1064" y="651" width="210" height="1" fill="#333"/>
<rect x="1064" y="652" width="210" height="17" fill="url(#gh)"/>
<text x="1068" y="664" textLength="30">Name</text>
<path d="M1229 663l6-5 7 5z" fill="#9a9a9a"/>
<rect x="1244" y="654" width="1" height="13" fill="#999"/>
<text x="1249" y="664">Dime</text>
<rect x="1273" y="652" width="1" height="18" fill="#c6c6c6"/>
<rect x="1064" y="669" width="210" height="1" fill="#444"/>
<rect x="1064" y="670" width="210" height="96" fill="#fff"/>
<rect x="1064" y="766" width="210" height="1" fill="#444"/>
<rect x="1064" y="767" width="93" height="11" fill="#dcdcdc"/>
<rect x="1157" y="767" width="117" height="11" fill="#ababab"/>
<path d="M1255 769v7l-4-3.500zM1268 769v7l4-3.500z" fill="#111"/>
<rect x="1064" y="778" width="210" height="17" fill="#d4d4d4"/>
<rect x="1064.500" y="780.500" width="57" height="13" fill="#d6d6d6" stroke="#999"/>
<text x="1076" y="791" textLength="31" style="fill:#9a9a9a">Insert</text>
<path d="M1213 784a4.500 4.500 0 1 0 1 4" fill="none" stroke="#999" stroke-width="1.800"/><path d="M1210 786h4v-4z" fill="#999"/>
<path d="M1222 782h10v10h-10zM1227 788l6-7 2 1.500-6 7z" fill="#ddd" stroke="#a5a5a5"/>
<path d="M1241 787h6M1244 784v6" stroke="#999" stroke-width="1.800"/><path d="M1249 781h5v11l-2.500-2-2.500 2z" fill="#ddd" stroke="#a5a5a5"/>
<!-- left assets icons -->
<rect x="1037" y="555" width="21" height="20" rx="4" fill="#dedede" stroke="#888"/>
<rect x="1041" y="559" width="14" height="11" fill="#e8f4b0" stroke="#222"/><circle cx="1048" cy="563" r="3" fill="#3f9a3f"/><rect x="1042" y="566" width="12" height="3" fill="#5a9a3a"/>
<rect x="1040" y="579" width="16" height="10" fill="#222"/><path d="M1044 579v10M1048 579v10M1052 579v10M1040 582.500h16M1040 586h16" stroke="#ddd" stroke-width=".8"/>
<path d="M1042 600l6-4 7 11-4 3z" fill="#ddd" stroke="#222"/><path d="M1044 598l9 10M1047 597l7 9" stroke="#222" fill="none"/>
<path d="M1040 616h9l7 4v12h-16z" fill="#111"/><text x="1046" y="629" style="font-size:6px;font-weight:bold;fill:#eee">Fl</text>
<path d="M1041 644v4M1045 643v6M1049 643v7M1053 643v7M1056 642v8" stroke="#222" stroke-width="1.500"/>
<rect x="1041" y="660" width="14" height="9" fill="#bbb" stroke="#111" stroke-width="1.500"/><path d="M1038 660l4 2M1055 662h2v5h-2" stroke="#111" fill="none"/>
<path d="M1041 684l7-5 8 8-5 4z" fill="#ddd" stroke="#111"/><path d="M1046 683l5 5M1049 681l5 5" stroke="#111"/>
<path d="M1042 699h11l3 3v10h-14z" fill="#eee" stroke="#111"/><path d="M1044 703h9M1044 706h9M1044 709h9" stroke="#333"/>
<path d="M1041 720q3-2 7 0q4-2 7 0v11q-3-2-7 0q-4-2-7 0zM1048 720v11" fill="#f2f2f2" stroke="#111" stroke-width="1.200"/>
</svg>
</body>
</html>
